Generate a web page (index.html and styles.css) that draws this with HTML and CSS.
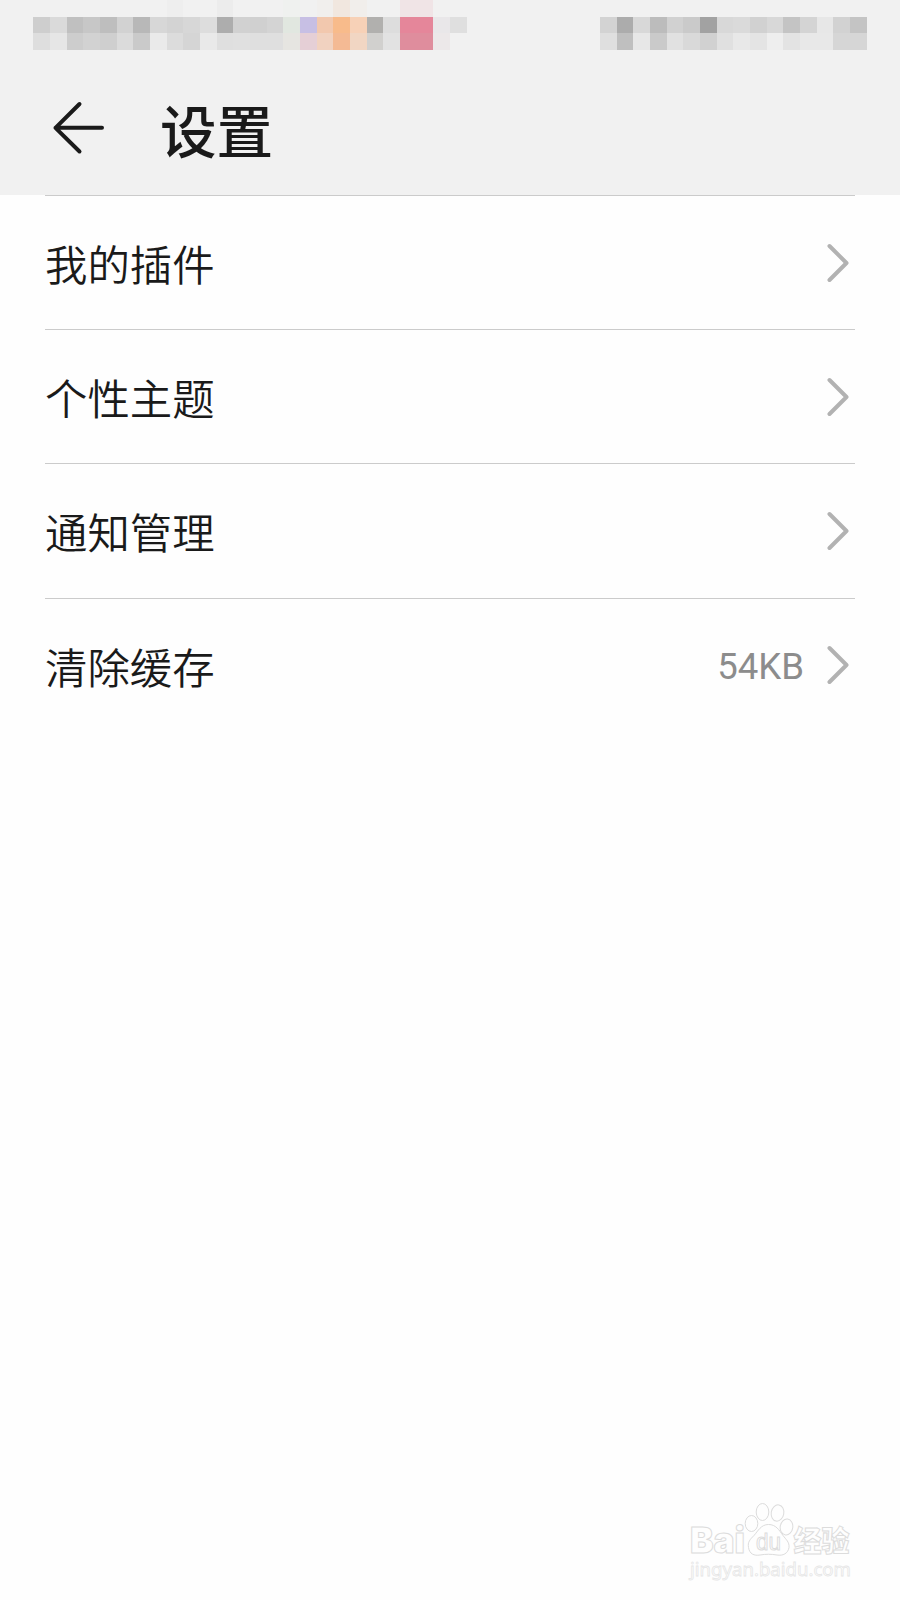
FILE: index.html
```html
<!DOCTYPE html>
<html lang="zh-CN">

<head>
    <meta charset="utf-8">
    <title>设置</title>
    <link rel="stylesheet" href="styles.css">
</head>

<body>
    <header class="header">
        <!-- pixelated status bar, one unit per block -->
        <svg class="status-bar" viewBox="0 0 54 3" shape-rendering="crispEdges">
            <g>
                <rect x="10" y="0" width="1" height="1" fill="#eeeeee" />
                <rect x="13" y="0" width="1" height="1" fill="#ececec" />
                <rect x="17" y="0" width="1" height="1" fill="#eff1ef" />
                <rect x="19" y="0" width="1" height="1" fill="#f1efed" />
                <rect x="20" y="0" width="1" height="1" fill="#f1e7df" />
                <rect x="21" y="0" width="1" height="1" fill="#f1eeeb" />
                <rect x="24" y="0" width="2" height="1" fill="#f0e4e6" />
            </g>
            <g>
                <rect x="2" y="1" width="1" height="1" fill="#cecece" />
                <rect x="3" y="1" width="1" height="1" fill="#dadada" />
                <rect x="4" y="1" width="1" height="1" fill="#c0c0c0" />
                <rect x="5" y="1" width="1" height="1" fill="#c7c7c7" />
                <rect x="6" y="1" width="1" height="1" fill="#bebebe" />
                <rect x="7" y="1" width="1" height="1" fill="#d2d2d2" />
                <rect x="8" y="1" width="1" height="1" fill="#b8b8b8" />
                <rect x="9" y="1" width="1" height="1" fill="#d7d7d7" />
                <rect x="10" y="1" width="1" height="1" fill="#d3d3d3" />
                <rect x="11" y="1" width="1" height="1" fill="#d7d7d7" />
                <rect x="12" y="1" width="1" height="1" fill="#dddddd" />
                <rect x="13" y="1" width="1" height="1" fill="#adadad" />
                <rect x="14" y="1" width="1" height="1" fill="#d1d1d1" />
                <rect x="15" y="1" width="1" height="1" fill="#d0d0d0" />
                <rect x="16" y="1" width="1" height="1" fill="#d4d4d4" />
                <rect x="17" y="1" width="1" height="1" fill="#e1e7e0" />
                <rect x="18" y="1" width="1" height="1" fill="#c7bfe4" />
                <rect x="19" y="1" width="1" height="1" fill="#f2c8ae" />
                <rect x="20" y="1" width="1" height="1" fill="#f8bb8b" />
                <rect x="21" y="1" width="1" height="1" fill="#f7d1b7" />
                <rect x="22" y="1" width="1" height="1" fill="#b1b0ae" />
                <rect x="23" y="1" width="1" height="1" fill="#dddddd" />
                <rect x="24" y="1" width="2" height="1" fill="#e5869a" />
                <rect x="26" y="1" width="1" height="1" fill="#e9e7e9" />
                <rect x="27" y="1" width="1" height="1" fill="#dfdfdf" />
                <rect x="36" y="1" width="1" height="1" fill="#d3d3d3" />
                <rect x="37" y="1" width="1" height="1" fill="#acacac" />
                <rect x="38" y="1" width="1" height="1" fill="#d8d8d8" />
                <rect x="39" y="1" width="1" height="1" fill="#bcbcbc" />
                <rect x="40" y="1" width="1" height="1" fill="#d1d1d1" />
                <rect x="41" y="1" width="1" height="1" fill="#cacaca" />
                <rect x="42" y="1" width="1" height="1" fill="#a2a2a2" />
                <rect x="43" y="1" width="1" height="1" fill="#d8d8d8" />
                <rect x="44" y="1" width="1" height="1" fill="#dadada" />
                <rect x="45" y="1" width="1" height="1" fill="#d1d1d1" />
                <rect x="46" y="1" width="1" height="1" fill="#d8d8d8" />
                <rect x="47" y="1" width="1" height="1" fill="#c4c4c4" />
                <rect x="48" y="1" width="1" height="1" fill="#d4d4d4" />
                <rect x="49" y="1" width="1" height="1" fill="#e7e7e7" />
                <rect x="50" y="1" width="1" height="1" fill="#d2d2d2" />
                <rect x="51" y="1" width="1" height="1" fill="#c4c4c4" />
            </g>
            <g>
                <rect x="2" y="2" width="1" height="1" fill="#dedede" />
                <rect x="3" y="2" width="1" height="1" fill="#e6e6e6" />
                <rect x="4" y="2" width="1" height="1" fill="#cdcdcd" />
                <rect x="5" y="2" width="1" height="1" fill="#d2d2d2" />
                <rect x="6" y="2" width="1" height="1" fill="#cfcfcf" />
                <rect x="7" y="2" width="1" height="1" fill="#dbdbdb" />
                <rect x="8" y="2" width="1" height="1" fill="#cacaca" />
                <rect x="9" y="2" width="1" height="1" fill="#eaeaea" />
                <rect x="10" y="2" width="1" height="1" fill="#dcdcdc" />
                <rect x="11" y="2" width="1" height="1" fill="#d5d5d5" />
                <rect x="12" y="2" width="1" height="1" fill="#e9e9e9" />
                <rect x="13" y="2" width="1" height="1" fill="#dfdfdf" />
                <rect x="14" y="2" width="1" height="1" fill="#e0e0e0" />
                <rect x="15" y="2" width="2" height="1" fill="#dfdfdf" />
                <rect x="17" y="2" width="1" height="1" fill="#e6e5e1" />
                <rect x="18" y="2" width="1" height="1" fill="#e5cfd6" />
                <rect x="19" y="2" width="1" height="1" fill="#f1d2c0" />
                <rect x="20" y="2" width="1" height="1" fill="#f4ba94" />
                <rect x="21" y="2" width="1" height="1" fill="#f1d6c3" />
                <rect x="22" y="2" width="1" height="1" fill="#d1d0ce" />
                <rect x="23" y="2" width="1" height="1" fill="#e2e2e2" />
                <rect x="24" y="2" width="2" height="1" fill="#df8d9d" />
                <rect x="26" y="2" width="1" height="1" fill="#ece8e9" />
                <rect x="36" y="2" width="1" height="1" fill="#dfdfdf" />
                <rect x="37" y="2" width="1" height="1" fill="#bfbfbf" />
                <rect x="38" y="2" width="1" height="1" fill="#e7e7e7" />
                <rect x="39" y="2" width="1" height="1" fill="#cacaca" />
                <rect x="40" y="2" width="1" height="1" fill="#e1e1e1" />
                <rect x="41" y="2" width="1" height="1" fill="#d9d9d9" />
                <rect x="42" y="2" width="1" height="1" fill="#d1d1d1" />
                <rect x="43" y="2" width="1" height="1" fill="#e0e0e0" />
                <rect x="44" y="2" width="1" height="1" fill="#e8e8e8" />
                <rect x="45" y="2" width="1" height="1" fill="#e4e4e4" />
                <rect x="46" y="2" width="1" height="1" fill="#eeeeee" />
                <rect x="47" y="2" width="1" height="1" fill="#e3e3e3" />
                <rect x="48" y="2" width="2" height="1" fill="#e8e8e8" />
                <rect x="50" y="2" width="1" height="1" fill="#d6d6d6" />
                <rect x="51" y="2" width="1" height="1" fill="#d6d6d6" />
            </g>
        </svg>
        <div class="title-bar">
            <svg class="back" viewBox="0 0 54 54">
                <path d="M28.5 3L4.5 26.8L28.5 50.5M4.5 26.8H51" />
            </svg>
            <h1 class="title">设置</h1>
        </div>
    </header>

    <main class="list">
        <div class="item">
            <span class="label">我的插件</span>
            <svg class="chevron" viewBox="0 0 22 40"><path d="M2.5 3L19.5 20L2.5 37" /></svg>
        </div>
        <div class="item">
            <span class="label">个性主题</span>
            <svg class="chevron" viewBox="0 0 22 40"><path d="M2.5 3L19.5 20L2.5 37" /></svg>
        </div>
        <div class="item">
            <span class="label">通知管理</span>
            <svg class="chevron" viewBox="0 0 22 40"><path d="M2.5 3L19.5 20L2.5 37" /></svg>
        </div>
        <div class="item">
            <span class="label">清除缓存</span>
            <span class="value">54KB</span>
            <svg class="chevron" viewBox="0 0 22 40"><path d="M2.5 3L19.5 20L2.5 37" /></svg>
        </div>
    </main>

    <svg class="watermark" viewBox="0 0 200 120">
        <text class="mark-bai" x="20" y="73" textLength="55" lengthAdjust="spacingAndGlyphs">Bai</text>
        <text class="mark-cn" x="123.5" y="71.5" textLength="56" lengthAdjust="spacingAndGlyphs">经验</text>
        <!-- paw -->
        <g class="paw">
            <ellipse cx="81.5" cy="43.5" rx="6.3" ry="8" />
            <ellipse cx="92.5" cy="32" rx="6.3" ry="8.5" />
            <ellipse cx="107.5" cy="33" rx="6.3" ry="8.2" transform="rotate(10 107.5 33)" />
            <ellipse cx="116.5" cy="47" rx="6.3" ry="8" transform="rotate(8 116.5 47)" />
            <path d="M98.5 44.5C91 44.5 88 51 84 55.5C80 59.5 77.5 62 78.5 67.5C79.5 74 84 76 90 75C96 74 101 74 107 75C113 76 118 73.5 119 67.5C119.5 62 116 59.5 113 55.5C109 50 106 44.5 98.5 44.5Z" />
        </g>
        <text class="mark-du" x="86" y="69.5" textLength="25" lengthAdjust="spacingAndGlyphs">du</text>
        <text class="mark-url" x="20" y="95.8" textLength="161" lengthAdjust="spacingAndGlyphs">jingyan.baidu.com</text>
    </svg>
</body>

</html>
```
FILE: styles.css
```css
body {
    margin: 0;
    min-height: 1600px;
    display: flex;
    flex-direction: column;
    background-color: #fefefe;
    color: #1a1a1a;
    font-family: 'Noto Sans CJK SC', sans-serif;
}

.header {
    height: 195px;
    background-color: #f1f1f1;
}

.status-bar {
    display: block;
    width: 900px;
    height: 50px;
}

.title-bar {
    display: flex;
    align-items: center;
    height: 156px;
    padding-left: 51px;
}

.back {
    width: 54px;
    height: 54px;
    fill: none;
    stroke: #1a1a1a;
    stroke-width: 4;
    stroke-linecap: round;
    stroke-linejoin: round;
}

.title {
    margin: 0 0 1px 55px;
    font-size: 56.6px;
    font-weight: 500;
    line-height: 80px;
}

.list {
    margin: 0 45px;
}

.item {
    display: flex;
    align-items: center;
    box-sizing: border-box;
    height: 134.2px;
    padding-right: 6px;
    border-top: 1px solid #cbcbcb;
}

.label {
    flex: 1;
    padding-top: 1px;
    font-size: 42.4px;
    font-weight: 350;
    line-height: 60px;
}

.value {
    margin-right: 23px;
    padding-top: 3px;
    color: #8c8c8c;
    font-family: Roboto, sans-serif;
    font-size: 36.6px;
}

.chevron {
    width: 22px;
    height: 40px;
    fill: none;
    stroke: #b2b2b2;
    stroke-width: 4;
    stroke-linecap: round;
    stroke-linejoin: round;
}

.watermark {
    width: 200px;
    height: 120px;
    margin: auto 30px 0 auto;
    fill: #fefefe;
    stroke: #dcdcdc;
    stroke-width: 1;
}

.mark-bai {
    font-family: Inter, sans-serif;
    font-size: 36px;
    font-weight: 900;
}

.mark-cn {
    font-size: 29px;
    font-weight: 900;
}

.mark-du {
    font-family: 'Liberation Sans', sans-serif;
    font-size: 24px;
}

.mark-url {
    font-family: 'Noto Sans', sans-serif;
    font-size: 18.8px;
    stroke: #e6e6e6;
    stroke-width: 0.8;
}
```
